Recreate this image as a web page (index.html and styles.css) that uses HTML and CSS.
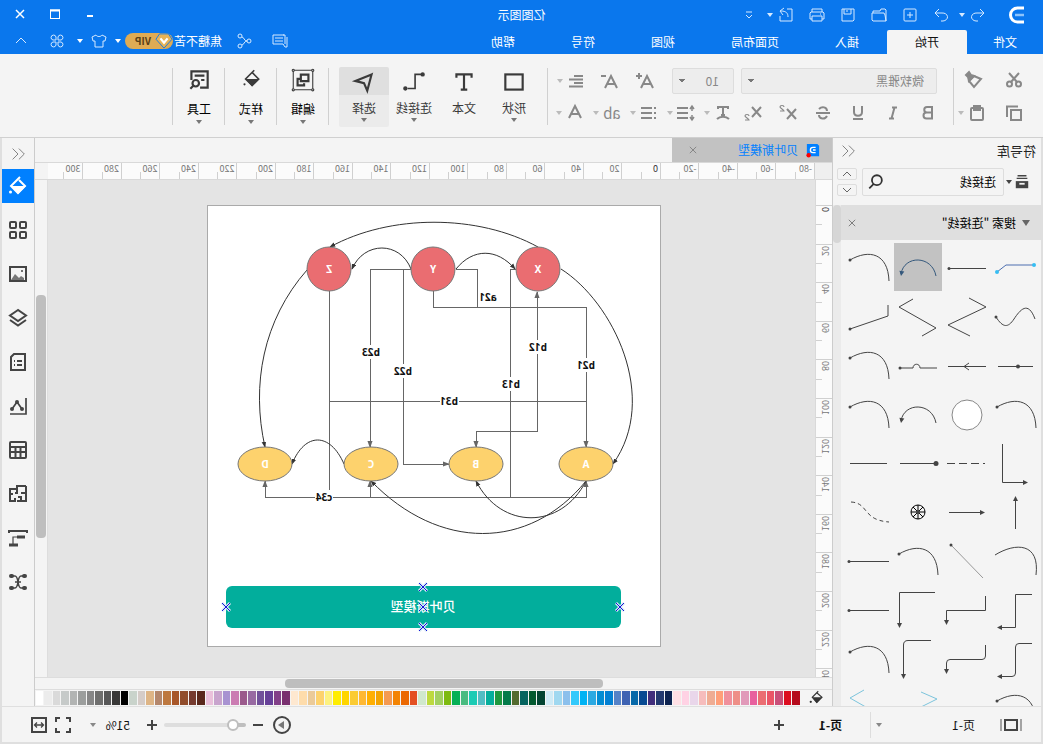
FILE: index.html
```html
<!DOCTYPE html>
<html lang="zh-CN">
<head>
<meta charset="utf-8">
<title>亿图图示</title>
<link rel="stylesheet" href="styles.css">
</head>
<body>
<div class="app">
  <header class="header">
    <div class="titlebar">
      <div class="title-left">
        <svg class="logo" viewBox="0 0 20 20"><path d="M3 3h6.500a7 7 0 0 1 0 14H3" fill="none" stroke="#fff" stroke-width="3"/><path d="M3 10h9" stroke="#8cc3fb" stroke-width="2.500"/></svg>
        <button class="tool has-caret" aria-label="撤销"><svg viewBox="0 0 20 20"><path d="M8 4L4 8l4 4M4 8h7a5 4 0 0 1 1 8h-2"/></svg><i class="caret"></i></button>
        <button class="tool" aria-label="重做"><svg viewBox="0 0 20 20"><path d="M12 4l4 4-4 4M16 8H9a5 4 0 0 0-1 8h2"/></svg></button>
        <button class="tool" aria-label="新建"><svg viewBox="0 0 20 20"><rect x="4" y="4" width="12" height="12" rx="1"/><path d="M10 7v6M7 10h6"/></svg></button>
        <button class="tool" aria-label="打开"><svg viewBox="0 0 20 20"><path d="M3 16V5l1-1h4l1 2h7v2M3 16l1-6 1-2h12v7l-1 1z"/></svg></button>
        <button class="tool" aria-label="保存"><svg viewBox="0 0 20 20"><path d="M4 4h12v12H5l-1-1zM7 4v5h7V4M11 5v2"/></svg></button>
        <button class="tool" aria-label="打印"><svg viewBox="0 0 20 20"><path d="M5 7V4h10v3M5 14H3V8l1-1h12l1 1v6h-2M5 11h10v5H5zM6 9h1"/></svg></button>
        <button class="tool has-caret" aria-label="导出"><svg viewBox="0 0 20 20"><path d="M9 4H4v12h12v-5M8 12c0-4 2-6 7-6M12 3l4 3-3 4"/></svg><i class="caret"></i></button>
        <button class="tool more" aria-label="更多"><svg viewBox="0 0 20 20"><path d="M7 7h6M7 10l3 3 3-3"/></svg></button>
      </div>
      <h1 class="title">亿图图示</h1>
      <div class="win-buttons">
        <button aria-label="最小化"><svg viewBox="0 0 20 20"><path d="M7 11h6" stroke-width="2"/></svg></button>
        <button aria-label="最大化"><svg viewBox="0 0 20 20"><rect x="5.500" y="5" width="9" height="8.500"/><path d="M5 5.500h10" stroke-width="2"/></svg></button>
        <button aria-label="关闭"><svg viewBox="0 0 20 20"><path d="M6 5l8 8M14 5l-8 8" stroke-width="1.500"/></svg></button>
      </div>
    </div>
    <div class="menubar">
      <nav class="tabs">
        <button>文件</button><button class="active">开始</button><button>插入</button><button class="wide">页面布局</button><button>视图</button><button>符号</button><button>帮助</button>
      </nav>
      <div class="account">
        <button class="tool" aria-label="消息"><svg viewBox="0 0 20 20"><path d="M3 16V6M6 4h11v9H7l-2 3H3M5 13V4h2M7 7h8M7 10h8"/></svg></button>
        <button class="tool" aria-label="分享"><svg viewBox="0 0 20 20"><circle cx="5" cy="10" r="2"/><circle cx="14" cy="5" r="2"/><circle cx="14" cy="15" r="2"/><path d="M7 10c3 0 3-4 5-4M7 10c3 0 3 4 5 4"/></svg></button>
        <span class="user">焦糖不苦</span>
        <span class="vip"><svg viewBox="0 0 20 18"><path d="M5 1h10l4 6-9 10L1 7z" fill="#e8b355" stroke="#0a77ed"/><path d="M6 6l4 5 4-5" stroke="#fff" stroke-width="2.500" fill="none"/></svg>VIP</span>
        <i class="caret"></i>
        <button class="tool" aria-label="主题"><svg viewBox="0 0 20 20"><path d="M7 4L3 6l1 4h2v6h8v-6h2l1-4-4-2c-1 2-5 2-6 0z"/></svg></button>
        <i class="caret"></i>
        <button class="tool apps" aria-label="应用"><svg viewBox="0 0 20 20"><path d="M9 9H6a2.500 2.500 0 1 1 3-3zM11 9h3a2.500 2.500 0 1 0-3-3zM9 11H6a2.500 2.500 0 1 0 3 3zM11 11h3a2.500 2.500 0 1 1-3 3z"/></svg></button>
        <button class="tool" aria-label="收起"><svg viewBox="0 0 20 20"><path d="M5 12l5-5 5 5"/></svg></button>
      </div>
    </div>
  </header>

  <section class="ribbon">
    <div class="clipboard">
      <button class="icon" aria-label="剪切"><svg viewBox="0 0 18 18"><circle cx="4.500" cy="13" r="2.500"/><circle cx="13.500" cy="13" r="2.500"/><path d="M6 11l8-9M12 11L4 2"/></svg></button>
      <button class="icon" aria-label="格式刷"><svg viewBox="0 0 18 18"><path d="M2 8l7-3 5 5-5 6z"/><path d="M9 5l3-1 2-3 3 3-2 2-1 4z" fill="currentColor"/></svg></button>
      <button class="icon" aria-label="复制"><svg viewBox="0 0 18 18"><rect x="2" y="6" width="10" height="10"/><path d="M5 2.500h11V13"/></svg></button>
      <button class="icon split" aria-label="粘贴"><svg viewBox="0 0 18 18"><rect x="3" y="4" width="12" height="12" rx="1"/><path d="M6 2h6v4H6z"/></svg><i class="caret pale"></i></button>
    </div>
    <div class="font-group">
      <div class="row first">
        <select class="font-name" aria-label="字体"><option>微软雅黑</option></select>
        <select class="font-size" aria-label="字号"><option>10</option></select>
        <button class="icon grow" aria-label="增大字号"><svg viewBox="0 0 18 18"><path d="M1 16L7 4l6 12M3 12h8M12 4h6M15 1v6"/></svg></button>
        <button class="icon grow" aria-label="减小字号"><svg viewBox="0 0 18 18"><path d="M1 16L7 4l6 12M3 12h8M12 4h5"/></svg></button>
        <button class="icon split" aria-label="对齐"><svg viewBox="0 0 18 18"><path d="M2 4h9M2 7.500h14M2 11h9M2 14.500h14"/></svg><i class="caret pale"></i></button>
      </div>
      <div class="row">
        <button class="icon glyph" aria-label="加粗"><svg viewBox="0 0 18 18"><path d="M5 3h5a2.500 2.500 0 0 1 0 5.500H5zM5 8.500h5.500a3 3 0 0 1 0 6H5z"/></svg></button>
        <button class="icon glyph" aria-label="倾斜"><svg viewBox="0 0 18 18"><path d="M5 3.500h5M8 14.500h5M7.500 3.500l3 11"/></svg></button>
        <button class="icon glyph" aria-label="下划线"><svg viewBox="0 0 18 18"><path d="M5 2v6c0 5 8 5 8 0V2M4 15h10"/></svg></button>
        <button class="icon glyph" aria-label="删除线"><svg viewBox="0 0 18 18"><path d="M13 5C10 2 5 3 5 7M5 12c2 4 8 3 8-1M2 9h14"/></svg></button>
        <button class="icon glyph" aria-label="上标"><svg viewBox="0 0 18 18"><path d="M1 5l9 10M10 5L1 15"/><path d="M13 3c0-2 4-2 4 0 0 1-4 3-4 4h4" stroke-width="1.200"/></svg></button>
        <button class="icon glyph" aria-label="下标"><svg viewBox="0 0 18 18"><path d="M1 3l9 10M10 3L1 13"/><path d="M13 12c0-2 4-2 4 0 0 1-4 3-4 4h4" stroke-width="1.200"/></svg></button>
        <button class="icon split" aria-label="文字效果"><svg viewBox="0 0 18 18"><path d="M4 5V3h10v2M9 3v8M7 11h4M3 15c3-3 9-3 12 0"/></svg><i class="caret pale"></i></button>
        <button class="icon split" aria-label="行距"><svg viewBox="0 0 18 18"><path d="M7 4h11M7 9h11M7 14h11"/><path d="M3 3v4M3 11v4M1 5l2-3 2 3M1 13l2 3 2-3" stroke-width="1.500"/></svg><i class="caret pale"></i></button>
        <button class="icon split" aria-label="项目符号"><svg viewBox="0 0 18 18"><path d="M6 4h11M6 9h11M6 14h11M2 4h2M2 9h2M2 14h2"/></svg><i class="caret pale"></i></button>
        <button class="icon split ab" aria-label="突出显示"><span>ab</span><i class="caret pale"></i></button>
        <button class="icon split" aria-label="字体颜色"><svg viewBox="0 0 18 18"><path d="M3 14L9 2l6 12M5 10h8"/></svg><i class="caret pale"></i></button>
      </div>
    </div>
    <div class="insert-tools">
      <button class="big"><svg viewBox="0 0 24 24"><rect x="4" y="5" width="16" height="14"/></svg><span>形状</span><i class="caret"></i></button>
      <button class="big"><svg viewBox="0 0 24 24"><path d="M5 8V5h14v3M12 5v14M9 19h6"/></svg><span>文本</span></button>
      <button class="big"><svg viewBox="0 0 24 24"><path d="M4 5h7v13h7" stroke-width="1.500"/><circle cx="4" cy="5" r="1"/><circle cx="20" cy="18" r="1"/></svg><span>连接线</span><i class="caret"></i></button>
      <button class="big selected"><svg viewBox="0 0 24 24"><path d="M5 5l15 6-8 2-3 7z"/></svg><span>选择</span><i class="caret"></i></button>
    </div>
    <div class="group"><button class="big"><svg viewBox="0 0 24 24"><path d="M3 3h18v18H3z" stroke-width="1"/><path d="M7 7h7v6H7zM15 11h2v6h-6v-2"/><g stroke-width="1" fill="#f4f4f4"><circle cx="3" cy="3" r="1"/><circle cx="21" cy="3" r="1"/><circle cx="3" cy="21" r="1"/><circle cx="21" cy="21" r="1"/></g></svg><span>编辑</span><i class="caret"></i></button></div>
    <div class="group"><button class="big"><svg viewBox="0 0 24 24"><path d="M9 3l8 8-6 6-6-6 6-6" stroke-width="1.500"/><path d="M4 11h13l-6 7z" fill="currentColor" stroke="none"/><circle cx="18" cy="16" r="1" fill="currentColor" stroke="none"/></svg><span>样式</span><i class="caret"></i></button></div>
    <div class="group last"><button class="big"><svg viewBox="0 0 24 24"><path d="M11 19H4V4h15v8M7 8h9M7 12h3"/><circle cx="15" cy="15" r="3"/><path d="M17 17l3 3"/></svg><span>工具</span><i class="caret"></i></button></div>
  </section>

  <main class="workspace">
    <aside class="library">
      <div class="lib-head"><h2>符号库</h2><button class="collapse" aria-label="折叠"><svg viewBox="0 0 20 20"><path d="M9 4l-6 6 6 6M16 4l-6 6 6 6"/></svg></button></div>
      <div class="lib-search">
        <button class="drawer" aria-label="符号分类"><svg viewBox="0 0 18 18"><path d="M4 2h10M3 5h12" stroke="currentColor" stroke-width="1.500"/><path d="M2 8h14v8H2z" fill="currentColor"/><path d="M6 11h6" stroke="#f4f4f4" stroke-width="2"/></svg><i class="caret"></i></button>
        <label class="search"><input type="text" value="连接线" aria-label="搜索符号"><svg viewBox="0 0 20 20"><circle cx="9" cy="8" r="5.500"/><path d="M12.500 12l5 5"/></svg></label>
        <div class="steps"><button aria-label="上一个"><svg viewBox="0 0 12 8"><path d="M2 6l4-4 4 4"/></svg></button><button aria-label="下一个"><svg viewBox="0 0 12 8"><path d="M2 2l4 4 4-4"/></svg></button></div>
      </div>
      <div class="lib-body">
        <div class="lib-list">
          <div class="category"><i class="caret large"></i><span>搜索 "连接线"</span><button aria-label="关闭"><svg viewBox="0 0 10 10"><path d="M1 1l8 8M9 1L1 9"/></svg></button></div>
          <div class="symbols" id="symbols"></div>
        </div>
        <div class="lib-scroll"><i></i></div>
      </div>
    </aside>

    <section class="document">
      <div class="doc-tabs">
        <div class="doc-tab"><svg viewBox="0 0 16 16"><path d="M3 1h12v14H1V3z" fill="#0080ff"/><path d="M5 5h3a3 3 0 0 1 0 6H5M5 8h3" stroke="#fff" stroke-width="1.500" fill="none"/><circle cx="13" cy="14" r="2.500" fill="#f00"/></svg><a href="#page">贝叶斯模型</a><button aria-label="关闭"><svg viewBox="0 0 10 10"><path d="M1 1l8 8M9 1L1 9"/></svg></button></div>
      </div>
      <div class="h-ruler-row"><div class="corner"></div><div class="h-ruler" id="hruler"></div><div class="corner end"></div></div>
      <div class="stage">
        <div class="v-ruler"><div class="v-scale" id="vruler"></div></div>
        <div class="canvas">
          <svg class="page" id="page" viewBox="0 0 454 442" role="img" aria-label="贝叶斯模型">
            <defs>
              <marker id="ar" viewBox="0 0 8 6" refX="7" refY="3" markerWidth="7" markerHeight="6" orient="auto-start-reverse"><path d="M0 0l8 3-8 3z" fill="#666" stroke="none"/></marker>
              <marker id="ac" viewBox="0 0 8 6" refX="7" refY="3" markerWidth="6" markerHeight="5" orient="auto"><path d="M0 0l8 3-8 3z" fill="#333" stroke="none"/></marker>
            </defs>
            <rect class="sheet" x="0.500" y="0.500" width="453" height="441"/>
            <g class="ortho">
              <path marker-end="url(#ar)" d="M250 64H291V242"/>
              <path marker-end="url(#ar)" d="M258 64V259H212"/>
              <path d="M205 64H184V102"/>
              <path marker-end="url(#ar)" d="M228 86V102H75V242"/>
              <path d="M145 64H151V292"/>
              <path marker-start="url(#ar)" marker-end="url(#ar)" d="M124 87V226H185V242"/>
              <path d="M332 86V285M332 196H75"/>
              <path marker-start="url(#ar)" marker-end="url(#ar)" d="M396 276V292H75V276"/>
              <path marker-end="url(#ar)" d="M291 292V276"/>
            </g>
            <g class="curves">
              <path d="M123 42C183 9 271 9 331 42"/>
              <path d="M250 64C261 36 297 36 309 64"/>
              <path d="M205 64C188 43 164 43 146 64"/>
              <path d="M100 64C48 97 1 193 48 259"/>
              <path d="M354 65C398 115 410 180 396 242"/>
              <path d="M317 259C331 227 356 227 369 259"/>
              <path d="M75 276C132 346 222 346 290 276"/>
              <path d="M75 276C100 325 160 325 185 276"/>
            </g>
            <g class="red"><circle cx="123" cy="64" r="22"/><circle cx="228" cy="64" r="22"/><circle cx="332" cy="64" r="22"/></g>
            <g class="yellow"><ellipse cx="75" cy="259" rx="27" ry="17"/><ellipse cx="185" cy="259" rx="27" ry="17"/><ellipse cx="290" cy="259" rx="27" ry="17"/><ellipse cx="396" cy="259" rx="27" ry="17"/></g>
            <g class="node-text"><text x="123" y="68">X</text><text x="228" y="68">Y</text><text x="332" y="68">Z</text><text x="75" y="263">A</text><text x="185" y="263">B</text><text x="290" y="263">C</text><text x="396" y="263">D</text></g>
            <g class="gaps"><rect x="281" y="140" width="19" height="14"/><rect x="248" y="159" width="19" height="14"/><rect x="113" y="135" width="19" height="14"/><rect x="65" y="153" width="19" height="14"/><rect x="140" y="172" width="19" height="14"/><rect x="202" y="189" width="19" height="14"/><rect x="328" y="285" width="18" height="14"/></g>
            <g class="edge-text"><text x="290" y="151">b23</text><text x="258" y="170">b22</text><text x="123" y="146">b12</text><text x="75" y="164">b21</text><text x="150" y="183">b13</text><text x="212" y="200">b31</text><text x="173" y="96">a21</text><text x="337" y="296">c34</text></g>
            <rect class="banner" x="40" y="381" width="395" height="42" rx="6"/>
            <text class="banner-text" x="238" y="406">贝叶斯模型</text>
            <g id="handles"></g>
          </svg>
        </div>
        <div class="v-scroll"><i></i></div>
      </div>
      <div class="h-scroll"><i></i></div>
      <div class="palette"><svg class="bucket" viewBox="0 0 24 24"><path d="M9 3l8 8-6 7-7-7 7-6" stroke-width="1.500"/><path d="M4 11h13l-6 8z" fill="currentColor" stroke="none"/><circle cx="19" cy="17" r="1.500" fill="currentColor" stroke="none"/></svg><div class="swatches" id="swatches"></div></div>
    </section>

    <aside class="rail">
      <button class="collapse" aria-label="展开"><svg viewBox="0 0 20 20"><path d="M9 4l-6 6 6 6M16 4l-6 6 6 6"/></svg></button>
      <button class="on" aria-label="样式"><svg viewBox="0 0 20 20"><path d="M8 1l9 9-7 7-7-7 6-6"/><path d="M2 10h15l-7 8z" fill="currentColor" stroke="none"/><circle cx="17.500" cy="16" r="1.500" fill="currentColor" stroke="none"/></svg></button>
      <button aria-label="组件"><svg viewBox="0 0 20 20"><rect x="2" y="2" width="6" height="6" rx="1"/><rect x="12" y="2" width="6" height="6" rx="1"/><rect x="2" y="12" width="6" height="6" rx="1"/><rect x="12" y="12" width="6" height="6" rx="1"/></svg></button>
      <button aria-label="图片"><svg viewBox="0 0 20 20"><rect x="2" y="3" width="16" height="14"/><path d="M4 16v-2l3-2 2 2 4-4 4 6z" fill="#777" stroke="none"/><path d="M5 7h2" stroke-width="1.500"/></svg></button>
      <button aria-label="图层"><svg viewBox="0 0 20 20"><path d="M10 2l8 5.500-8 5.500-8-5.500zM2 12l8 5.500 8-5.500"/></svg></button>
      <button aria-label="备注"><svg viewBox="0 0 20 20"><path d="M3 2h11l3 3v13H3zM6 9h5M6 13h5M13 9h1M13 13h1"/></svg></button>
      <button aria-label="图表"><svg viewBox="0 0 20 20"><path d="M2 2v16h16M6 13l5-7 5 7" stroke-width="1.700"/><g fill="currentColor" stroke="none"><circle cx="6" cy="13" r="2"/><circle cx="11" cy="6" r="2"/><circle cx="16" cy="13" r="2"/></g></svg></button>
      <button aria-label="表格"><svg viewBox="0 0 20 20"><rect x="2" y="2" width="16" height="16" rx="1"/><path d="M2 7h16M2 12h16M7.500 7v11M12.500 7v11"/></svg></button>
      <button aria-label="平面图"><svg viewBox="0 0 20 20"><path d="M2 2h9v3h7v12h-5v-3M11 17H2V2M2 9h4v-1M7 17v-4h3M11 5v4h2M18 10h-3"/></svg></button>
      <button aria-label="甘特图"><svg viewBox="0 0 20 20"><path d="M1 5V3h18v2"/><path d="M3 9h8M10 17h9" stroke-width="3"/><path d="M11 9h4v7" stroke-width="1.200"/></svg></button>
      <button aria-label="思维导图"><svg viewBox="0 0 20 20"><path d="M4 4h3c4 0 2 12 6 12h3M16 4h-3c-4 0-2 12-6 12H4M7 10h6" stroke-width="1.500"/><g fill="currentColor" stroke="none"><rect x="1" y="2" width="5" height="4" rx="2"/><rect x="1" y="14" width="5" height="4" rx="2"/><rect x="14" y="2" width="5" height="4" rx="2"/><rect x="14" y="14" width="5" height="4" rx="2"/></g></svg></button>
    </aside>
  </main>

  <footer class="status">
    <button class="pages" aria-label="页面视图"><svg viewBox="0 0 24 20"><path d="M2 4v12M22 4v12" stroke="#888" stroke-width="1.500"/><rect x="6" y="5" width="12" height="10"/></svg></button>
    <button class="page-pick"><span>页-1</span><i class="caret"></i></button>
    <button class="page-tab">页-1</button>
    <button class="sq" aria-label="添加页"><svg viewBox="0 0 20 20"><path d="M10 5v10M5 10h10"/></svg></button>
    <div class="zoom">
      <button class="sq" aria-label="播放"><svg viewBox="0 0 20 20"><circle cx="10" cy="10" r="8"/><path d="M8 6l6 4-6 4z" fill="#777" stroke="none"/></svg></button>
      <button class="sq" aria-label="缩小"><svg viewBox="0 0 20 20"><path d="M5 10h10"/></svg></button>
      <input type="range" min="0" max="100" value="10" aria-label="缩放">
      <button class="sq" aria-label="放大"><svg viewBox="0 0 20 20"><path d="M10 5v10M5 10h10"/></svg></button>
      <button class="percent"><span>51%</span><i class="caret"></i></button>
      <button class="sq" aria-label="全屏"><svg viewBox="0 0 20 20"><path d="M3 7V3h4M13 3h4v4M17 13v4h-4M7 17H3v-4"/></svg></button>
      <button class="sq" aria-label="适应宽度"><svg viewBox="0 0 20 20"><rect x="3" y="3" width="14" height="14"/><path d="M6 10h8M8 7.500L5.500 10 8 12.500M12 7.500l2.500 2.500-2.500 2.500" stroke-width="1.300"/></svg></button>
    </div>
  </footer>
</div>
<script src="app.js"></script>
</body>
</html>
```

FILE: styles.css
```css
* { box-sizing: border-box; }
html, body { margin: 0; height: 100%; }
body { font: 12px/16px "Noto Sans CJK SC", "Noto Sans", sans-serif; color: #222; background: #f4f4f4; overflow: hidden; }
button { font: inherit; color: inherit; background: none; border: 0; padding: 0; margin: 0; display: flex; align-items: center; justify-content: center; flex: none; }
svg { display: block; flex: none; fill: none; stroke: currentColor; overflow: visible; }
h1, h2 { margin: 0; font-size: 12px; font-weight: 400; }

/* The whole window is shown mirrored. */
.app { height: 100vh; display: flex; flex-direction: column; transform: scaleX(-1); background: #f4f4f4; }

.caret { flex: none; width: 0; height: 0; border: 3px solid transparent; border-top: 4px solid currentColor; border-bottom: 0; }
.caret.pale { border-top-color: #bbb; }
.caret.large { border-width: 6px 4px 0; border-top-color: #666; }

.header { background: #0a77ed; color: #fff; }
.titlebar { height: 30px; display: grid; grid-template-columns: 1fr auto 1fr; align-items: center; }
.title-left { display: flex; align-items: center; padding-left: 16px; }
.title-left .logo { width: 20px; height: 20px; margin-right: 10px; }
.tool { width: 31px; height: 20px; color: #d6eaff; }
.tool svg { width: 20px; height: 20px; }
.tool.has-caret { width: 40px; gap: 3px; }
.tool.more { width: 26px; }
.title-left .has-caret:nth-of-type(1) { padding-left: 6px; width: 40px; }
.win-buttons { display: flex; justify-content: flex-end; padding-right: 3px; }
.win-buttons button { width: 35px; }
.win-buttons svg { width: 20px; height: 20px; }

.menubar { height: 24px; display: flex; justify-content: space-between; align-items: stretch; }
.tabs { display: flex; }
.tabs button { width: 80px; padding-bottom: 1px; }
.tabs button:first-child { width: 76px; }
.tabs .wide { width: 104px; }
.tabs .active { background: #f4f4f4; color: #111; border-radius: 2px 2px 0 0; }
.account { display: flex; align-items: center; padding: 0 5px 2px 0; }
.account .tool { width: 32px; }
.account .tool:first-child, .account .tool:nth-child(2) { width: 36px; }
.account .tool:nth-child(2) { margin-right: 4px; }
.account .apps { margin: 0 4px; }
.vip { display: flex; align-items: center; width: 48px; height: 16px; margin: 0 4px 0 1px; border-radius: 8px; background: #dfab54; color: #5a4017; font-weight: 700; font-size: 10px; gap: 4px; }
.vip svg { width: 18px; height: 16px; }

.ribbon { display: flex; height: 84px; padding: 14px 2px 12px; border-bottom: 1px solid #d0d0d0; color: #888; }
.ribbon .icon svg { width: 18px; height: 18px; stroke-width: 2; }
.clipboard { width: 88px; padding-left: 7px; display: grid; grid-template-columns: 40px 40px; grid-template-rows: 24px 24px; border-right: 1px solid #d0d0d0; row-gap: 9px; }
.clipboard .split { gap: 4px; padding-left: 4px; }
.font-group { width: 406px; padding-left: 7px; border-right: 1px solid #d0d0d0; display: flex; flex-direction: column; gap: 8px; }
.row { display: flex; align-items: center; height: 22px; }
.row.first { height: 26px; padding-left: 9px; }
.row select { appearance: none; height: 26px; border: 1px solid #ddd; border-radius: 2px; font: inherit; color: #888; padding: 0 12px; background: #ededed conic-gradient(from 315deg at 50% 100%, #777 90deg, transparent 0) right 9px top 10px / 7px 4px no-repeat; }
.font-name { width: 196px; margin-right: 7px; }
.font-size { width: 62px; }
.row .font-size { padding-left: 14px; }
.grow { width: 18px; margin-left: 18px; }
.grow + .split { margin-left: 11px; }
.glyph { width: 35px; }
.row .split { width: 37px; padding-left: 4px; gap: 4px; justify-content: flex-start; }
.ab span { width: 18px; font-size: 15px; }

.row select { background-image: conic-gradient(from 135deg at 50% 0, transparent 0), linear-gradient(to bottom right, #777 50%, transparent 50%), linear-gradient(to bottom left, #777 50%, transparent 50%); background-size: 0 0, 3px 4px, 3px 4px; background-position: 0 0, right 6px top 10px, right 9px top 10px; background-repeat: no-repeat; }

.insert-tools { display: flex; padding: 0 10px 0 8px; border-right: 1px solid #d0d0d0; }
.big { width: 50px; height: 60px; margin-top: -1px; flex-direction: column; justify-content: flex-start; color: #3a3a3a; border-radius: 2px; }
.big svg { width: 26px; height: 26px; margin: 2px 0 4px; stroke-width: 2; }
.big span { line-height: 18px; }
.big .caret { margin-top: 1px; color: #777; }
.big.selected { background: linear-gradient(#dfdfdf 28px, #ebebeb 28px); }
.group { width: 52px; border-right: 1px solid #d0d0d0; }
.group .big svg { margin: 0 0 7px; }
.group .big span { color: #000; }
.group .big .caret { margin-top: 2px; }

.workspace { flex: 1; min-height: 0; display: flex; border: solid #dfdfdf; border-width: 0 2px; }
.library { width: 209px; display: flex; flex-direction: column; border-right: 1px solid #ccc; flex: none; }
.lib-head { display: flex; justify-content: space-between; align-items: center; height: 26px; padding: 0 6px 0 5px; }
.lib-head h2 { font-size: 13px; }
.collapse { color: #777; }
.collapse svg { width: 18px; height: 18px; }
.lib-search { display: flex; padding: 4px 4px 9px 11px; height: 41px; }
.drawer { width: 26px; gap: 2px; justify-content: flex-start; color: #444; }
.drawer svg { width: 16px; height: 16px; stroke: none; }
.search { flex: 1; min-width: 0; display: flex; align-items: center; border: 1px solid #ddd; border-radius: 2px; padding-right: 4px; }
.search input { flex: 1; min-width: 0; border: 0; background: none; font: inherit; color: #000; padding: 0 0 0 7px; outline: 0; }
.search svg { width: 18px; height: 18px; stroke-width: 2; color: #333; }
.steps { display: flex; flex-direction: column; gap: 4px; margin-left: 5px; }
.steps button { width: 20px; flex: 1; border: 1px solid #ddd; border-radius: 2px; color: #666; }
.steps svg { width: 12px; height: 8px; }
.lib-body { flex: 1; min-height: 0; display: flex; overflow: hidden; }
.lib-list { flex: 1; overflow: hidden; }
.category { height: 35px; display: flex; align-items: center; gap: 6px; padding: 0 7px 0 11px; background: #dfdfdf; margin-bottom: 3px; }
.category span { flex: 1; color: #000; }
.category button { color: #666; }
.category svg { width: 8px; height: 8px; }
.lib-scroll { width: 8px; background: #ebebeb; }
.lib-scroll i { display: block; height: 38px; border-radius: 4px; background: #d6d6d6; }
.symbols { display: grid; grid-template-columns: repeat(4, 48px); gap: 1px; padding-left: 1px; color: #444; }
.symbols button { height: 48px; }
.symbols svg { width: 48px; height: 48px; stroke-width: 1; }
.symbols .picked { background: #c2c2c2; color: #34587c; }

.document { flex: 1; min-width: 0; display: flex; flex-direction: column; }
.doc-tabs { height: 24px; }
.doc-tab { width: 160px; height: 24px; background: #c2c2c2; display: flex; align-items: center; gap: 8px; padding: 0 17px 0 12px; }
.doc-tab > svg { width: 14px; height: 14px; stroke: none; }
.doc-tab a { color: #0080ff; text-decoration: none; }
.doc-tab button { margin-left: auto; color: #777; }
.doc-tab button svg { width: 8px; height: 8px; }
.h-ruler-row { display: flex; height: 18px; border: solid #d9d9d9; border-width: 1px 0; background: #fbfbfb; }
.corner { width: 17px; background: #efefef; flex: none; }
.corner.end { width: 13px; background: #f4f4f4; position: relative; }
.h-ruler { flex: 1; display: flex; overflow: hidden; margin-right: -3px; font-size: 9px; line-height: 12px; color: #777; }
.h-ruler span { flex: 1 0 0; border-left: 1px solid #d0d0d0; padding-left: 2px; background: linear-gradient(#d0d0d0, #d0d0d0) 50% 100% / 1px 7px no-repeat; }
.h-ruler .zero, .v-ruler .zero { color: #333; }
.stage { flex: 1; min-height: 0; display: flex; }
.v-ruler { width: 17px; flex: none; overflow: hidden; padding-top: 25px; background: #fbfbfb; border-right: 1px solid #d9d9d9; font-size: 9px; line-height: 12px; color: #777; }
.v-scale { height: 502px; display: flex; flex-direction: column; }
.v-scale span { flex: 1; display: flex; width: 16px; padding: 1px 0 0 1px; border-top: 1px solid #d0d0d0; background: linear-gradient(#d0d0d0, #d0d0d0) 100% 50% / 6px 1px no-repeat; }
.v-scale b { font-weight: 400; writing-mode: vertical-rl; transform: rotate(180deg); height: max-content; }
.canvas { flex: 1; background: #e4e4e4; display: flex; justify-content: center; align-items: flex-start; padding-top: 25px; overflow: hidden; }
.page { width: 454px; height: 442px; margin-right: 6px; stroke-width: 1; }
.v-scroll { width: 13px; flex: none; border-left: 1px solid #ddd; padding: 115px 1px 0; }
.v-scroll i { display: block; height: 243px; border-radius: 4px; background: #bebebe; }
.h-scroll { height: 13px; padding: 1px 250px 1px 229px; border: solid #ddd; border-width: 1px 0; }
.h-scroll i { display: block; height: 9px; border-radius: 4px; background: #bebebe; }
.palette { height: 16px; display: flex; align-items: center; padding: 0 1px 0 7px; color: #333; }
.bucket { width: 18px; height: 18px; margin-right: 7px; }
.swatches { flex: 1; display: flex; gap: 1px; height: 14px; }
.swatches button { flex: 1 1 0; min-width: 0; }

.sheet { fill: #fff; stroke: #aaa; }
.ortho { stroke: #666; shape-rendering: crispEdges; }
.curves { stroke: #333; }
.curves path { marker-end: url(#ac); }
.red { fill: #ea6d71; stroke: #777; }
.yellow { fill: #fdd26d; stroke: #777; }
.page text { stroke: none; text-anchor: middle; font-family: "Noto Sans", sans-serif; font-weight: 700; font-size: 10px; }
.node-text { fill: #fff; }
.gaps { fill: #fff; stroke: none; }
.edge-text { fill: #111; }
.banner { fill: #02ae9c; stroke: none; }
.page .banner-text { fill: #fff; font-family: "Noto Sans CJK SC", sans-serif; font-size: 13px; font-weight: 500; }
.handle-halo { stroke: #d6e8f4; stroke-width: 3; }
.handle { stroke: #1414d8; stroke-width: 1; }

.rail { width: 33px; flex: none; border-left: 1px solid #ccc; display: flex; flex-direction: column; color: #444; }
.rail button { height: 34px; margin-bottom: 10px; }
.rail .collapse { height: 31px; margin: 0; }
.rail svg { width: 20px; height: 20px; stroke-width: 2; }
.rail .collapse svg { width: 18px; stroke-width: 1; }
.rail .on { background: #0080ff; color: #fff; }

.status { height: 38px; display: flex; align-items: center; border: solid #dfdfdf; border-width: 1px 2px 2px; color: #444; }
.status svg { stroke-width: 2; }
.status .caret { color: #888; }
.status span { color: #111; }
.pages { width: 24px; margin-left: 18px; }
.pages svg { width: 24px; height: 20px; }
.page-pick { width: 129px; height: 26px; padding: 0 5px 0 24px; justify-content: space-between; border-right: 1px solid #ddd; }
.page-tab { width: 79px; font-weight: 700; color: #111; }
.sq { width: 24px; height: 24px; }
.sq svg { width: 20px; height: 20px; }
.zoom { margin-left: auto; display: flex; align-items: center; padding-right: 25px; }
.zoom input { appearance: none; width: 82px; height: 4px; margin: 0; border-radius: 2px; background: linear-gradient(90deg, #bebebe 16%, #dedede 16%); }
.zoom input::-webkit-slider-thumb { appearance: none; width: 12px; height: 12px; border: 2px solid #bebebe; border-radius: 6px; background: #fff; }
.percent { width: 50px; gap: 10px; justify-content: flex-start; padding-left: 10px; margin-right: 15px; }
```

FILE: app.js
```js
const COLORS = `b50b1c dc0d20 c94f79 ea5567 eb6d72 e8609e e199b9 ee8f88 f0909c ff9f79 efac93 f6bcbc e9d6ea ffd2e4 ffe0e5
0d2350 23396f 412e7c 084a92 0668a8 3e62b2 5582c7 0380d3 038cd3 2ba9e2 00b3f4 33c9fb 8cc0ec a0d8f0 d0ebf6
034432 03592f 06645f 546b2f 037a49 1f983f 05ae9c 52bdc3 1bcbb4 49bb80 06b056 7eba11 a2d061 bdd93f d0e8cc
e45022 eb6903 f38403 f49a51 f3a402 ffaf02 ffb833 fbcb33 ffd500 ffed00 fdf17f fdd26d ebca98 fedcab fee8d0
79306f 823f88 664098 71519a 986aa2 9b5a8c cb7cb2 a893d1 c8a4cd eac1db
5a281c 763b2f 914c2b a85729 bd783f b4876c deb586 d5ccc8 c9d3cb
000000 393837 575757 6f6f6e 878787 9c9e9d b2b4b3 c6cac9 dadada ececec ffffff`.split(/\s+/);
document.getElementById('swatches').innerHTML =
  COLORS.map(c => `<button aria-label="#${c}" style="background:#${c}"></button>`).join('');

let h = '';
for (let n = -80; n <= 300; n += 20) h += `<span${n === 0 ? ' class="zero"' : ''}>${n}</span>`;
document.getElementById('hruler').innerHTML = h;
let v = '';
for (let n = 0; n <= 240; n += 20) v += `<span${n === 0 ? ' class="zero"' : ''}><b>${n}</b></span>`;
document.getElementById('vruler').innerHTML = v;

// Connector thumbnails. A dot marks the connector's head.
const line = (d, extra = '') => `<path d="${d}" ${extra}/>`;
const dot = (x, y, r = 1.5) => `<circle cx="${x}" cy="${y}" r="${r}" fill="currentColor" stroke="none"/>`;
const tip = (x, y, a) => `<path d="M0 0L-5-2.500V2.500z" transform="translate(${x} ${y}) rotate(${a})" fill="currentColor" stroke="none"/>`;
const arc = line('M43 17C24 6 5 10 4 38') + dot(43, 17);
const bow = line('M6 33C10 12 38 12 41 31') + tip(41, 33, 80);
const flat = line('M44 24.500H4') + dot(44, 24.5);
const wheel = '<g stroke="#000"><circle cx="24" cy="24" r="7"/><path d="M24 17v14M17 24h14M19 19l10 10M29 19L19 29"/></g>' + dot(24, 24, 2);
const SYMBOLS = [
  line('M6 22H34L43 29', 'stroke="#4d6fb0"') + '<g fill="#36bdf2" stroke="none"><circle cx="6" cy="22" r="2"/><circle cx="43" cy="29" r="2"/></g>',
  line('M42 25.500H5') + dot(42, 25.5), bow, arc,
  line('M44 25C37 36 32 36 26 27S12 8 5 27') + dot(44, 25), line('M22 6L5 15L43 33L21 44'), line('M29 7L43 15L6 36L20 44'), line('M5 13V24L43 37') + dot(43, 37),
  line('M42 25.500H7') + dot(22, 25.5, 2), line('M43 25.500H5M22 22L27 25.500L22 29'), line('M42 27H29C29 22 22 22 22 27H5') + dot(42, 27), arc,
  arc, '<circle cx="24" cy="25" r="15" fill="#fff" stroke="#888"/>', bow, arc,
  line('M37.500 5V43.500H14') + tip(12, 43.5, 180), line('M44 24.500H6', 'stroke-dasharray="8 4"'), line('M42 24.500H6') + dot(6, 24.5, 2.5), line('M43 24.500H6'),
  line('M24.500 41V10') + tip(24.5, 8, -90), line('M42 24.500H8') + tip(6, 24.5, 180), wheel, line('M42 14C24 15 31 32 4 34', 'stroke-dasharray="4 3"'),
  line('M45 18C24 5 0 6 4 38'), line('M40 8L8 41', 'stroke="#999"') + dot(40, 8), arc, flat,
  line('M8 8.500H24.500V41.500H40') + tip(43, 41.5, 0), line('M5.500 10V24.500H44.500V36') + tip(44.5, 39, 90), line('M7 6.500H42.500V39') + tip(42.5, 42, 90), flat,
  line('M8 8.500H21Q24.500 8.500 24.500 12V38Q24.500 41.500 28 41.500H40') + tip(43, 41.5, 0), line('M5.500 10V21Q5.500 24.500 9 24.500H41Q44.500 24.500 44.500 28V36') + tip(44.5, 39, 90), line('M11 5.500H34Q38.500 5.500 38.500 10V41') + tip(38.5, 44, 90), arc,
  arc, '', line('M21 8L5 15L37 31', 'stroke="#7cc4dc"'), line('M29 6L43 14L15 30', 'stroke="#7cc4dc"'),
];
document.getElementById('symbols').innerHTML = SYMBOLS.map((s, i) =>
  `<button aria-label="连接线 ${i + 1}"${i === 2 ? ' class="picked"' : ''}><svg viewBox="0 0 48 48">${s}</svg></button>`).join('');

document.getElementById('handles').innerHTML = [[41, 402], [435, 402], [238, 382], [238, 422], [238, 402]]
  .map(([x, y]) => ['handle-halo', 'handle'].map(c =>
    `<path class="${c}" d="M${x - 4} ${y - 4}l8 8M${x + 4} ${y - 4}l-8 8"/>`).join('')).join('');
```
